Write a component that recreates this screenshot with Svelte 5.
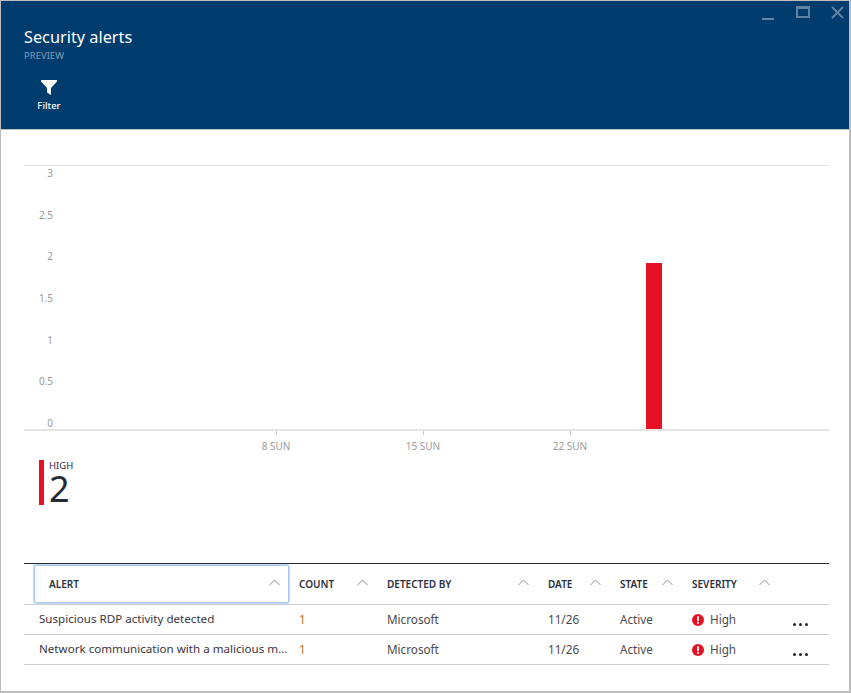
<script>
	const yLabels = ['3', '2.5', '2', '1.5', '1', '0.5', '0'];
	const ticks = [
		{ x: 252, label: '8 SUN' },
		{ x: 399, label: '15 SUN' },
		{ x: 546, label: '22 SUN' }
	];
	const columns = ['ALERT', 'COUNT', 'DETECTED BY', 'DATE', 'STATE', 'SEVERITY'];
	const alerts = [
		{ name: 'Suspicious RDP activity detected', count: 1, by: 'Microsoft', date: '11/26', state: 'Active', severity: 'High' },
		{ name: 'Network communication with a malicious m...', count: 1, by: 'Microsoft', date: '11/26', state: 'Active', severity: 'High' }
	];
</script>

<div class="blade">
	<header class="head">
		<div class="controls">
			<svg width="14" height="14" viewBox="0 0 14 14"><rect x="1" y="12" width="12" height="2" fill="#5f83a3" /></svg>
			<svg width="14" height="12" viewBox="0 0 14 12"><path d="M1 1h12v10H1z" fill="none" stroke="#5f83a3" stroke-width="2" /><rect x="0" y="0" width="14" height="3" fill="#5f83a3" /></svg>
			<svg width="13" height="13" viewBox="0 0 13 13"><path d="M1 1l11 11M12 1L1 12" stroke="#5f83a3" stroke-width="2" fill="none" /></svg>
		</div>
		<h1>Security alerts</h1>
		<div class="sub">PREVIEW</div>
		<button class="cmd">
			<svg width="16" height="15" viewBox="0 0 16 15"><path d="M0 0h16v1.5L10 8v7L6 12.5V8L0 1.500z" fill="#fff" /></svg>
			<span>Filter</span>
		</button>
	</header>

	<section class="chart">
		<div class="ylabels">
			{#each yLabels as label}
				<span>{label}</span>
			{/each}
		</div>
		<div class="bar"></div>
		{#each ticks as tick}
			<div class="tick" style="left: {tick.x}px"><i></i><span>{tick.label}</span></div>
		{/each}
	</section>

	<div class="legend">
		<div class="swatch"></div>
		<div>
			<div class="legend-name">HIGH</div>
			<div class="legend-value">2</div>
		</div>
	</div>

	<section class="grid">
		<div class="row header">
			{#each columns as col, i}
				<div class="th" class:focused={i === 0}>
					<span>{col}</span>
					<svg class="chev" width="11" height="7" viewBox="0 0 11 7"><path d="M.5 6L5.500 1l5 5" fill="none" stroke="#8a8a8a" /></svg>
				</div>
			{/each}
			<div></div>
		</div>
		{#each alerts as alert}
			<div class="row">
				<div class="td name">{alert.name}</div>
				<div class="td count">{alert.count}</div>
				<div class="td">{alert.by}</div>
				<div class="td">{alert.date}</div>
				<div class="td">{alert.state}</div>
				<div class="td sev">
					<svg width="12" height="12" viewBox="0 0 13 13"><circle cx="6.500" cy="6.500" r="6.500" fill="#e81123" /><rect x="5.500" y="2.500" width="2" height="5" fill="#fff" /><rect x="5.500" y="8.500" width="2" height="2" fill="#fff" /></svg>
					{alert.severity}
				</div>
				<div class="td dots"><i></i><i></i><i></i></div>
			</div>
		{/each}
	</section>
</div>

<style>
	:global(body) {
		background: #fff;
	}

	.blade {
		box-sizing: border-box;
		width: 851px;
		height: 693px;
		border: 1px solid #bdbdbd;
		border-width: 1px 2px 2px 1px;
		font-family: "Noto Sans", "Open Sans", sans-serif;
		color: #3a3a3a;
		overflow: hidden;
	}

	.head {
		position: relative;
		box-sizing: border-box;
		height: 129px;
		padding: 24px 0 0 23px;
		background: #003c6e;
		border-bottom: 1px solid #bdbdbd;
		color: #fff;
	}

	.controls {
		position: absolute;
		top: 5px;
		right: 5px;
		display: flex;
		align-items: flex-start;
		gap: 21px;
	}

	h1 {
		margin: 0;
		font-size: 16.300px;
		font-weight: 400;
		line-height: 24px;
	}

	.sub {
		font-size: 9.500px;
		line-height: 13px;
		color: #7f9db7;
	}

	.cmd {
		display: flex;
		flex-direction: column;
		align-items: center;
		width: 52px;
		margin: 18px 0 0 -1px;
		padding: 0;
		background: none;
		border: 0;
		color: #fff;
		font: inherit;
		font-size: 9.500px;
		font-weight: 500;
		line-height: 13px;
		gap: 4px;
	}

	.chart {
		position: relative;
		box-sizing: border-box;
		height: 266px;
		margin: 35px 20px 0 23px;
		border-top: 1px solid #e4e4e4;
		border-bottom: 2px solid #e4e4e4;
	}

	.ylabels {
		position: absolute;
		top: 0;
		left: 20px;
		width: 9px;
		height: 264px;
		display: flex;
		flex-direction: column;
		justify-content: space-between;
		align-items: flex-end;
		font-size: 10px;
		line-height: 14px;
		color: #9a9a9a;
	}

	.bar {
		position: absolute;
		left: 622px;
		bottom: 0;
		width: 16px;
		height: 166px;
		background: #e81123;
	}

	.tick {
		position: absolute;
		top: 100%;
		display: flex;
		flex-direction: column;
		align-items: center;
		width: 0;
		font-size: 10px;
		line-height: 14px;
		color: #9a9a9a;
	}

	.tick i {
		flex: none;
		width: 1px;
		height: 4px;
		margin-top: 2px;
		background: #c8c8c8;
	}

	.tick span {
		flex: none;
		margin-top: 4px;
		white-space: nowrap;
	}

	.legend {
		display: flex;
		gap: 5px;
		height: 45px;
		margin: 29px 0 0 38px;
	}

	.swatch {
		width: 5px;
		height: 45px;
		background: #e81123;
	}

	.legend-name {
		height: 11px;
		margin-top: -1px;
		font-size: 9.500px;
		line-height: 13px;
		color: #32283c;
	}

	.legend-value {
		font-size: 36px;
		line-height: 32px;
		margin-top: 3px;
		color: #252b36;
	}

	.grid {
		margin: 58px 20px 0 23px;
		border-top: 1px solid #2b2b2b;
	}

	.row {
		box-sizing: border-box;
		display: grid;
		grid-template-columns: 265px 88px 161px 72px 72px 97px 51px;
		height: 30px;
		border-bottom: 1px solid #cfcfcf;
	}

	.row.header {
		height: 41px;
	}

	.th {
		position: relative;
		display: flex;
		align-items: center;
		padding-left: 10px;
		font-size: 10px;
		font-weight: 600;
		color: #2b3140;
	}

	.th .chev {
		position: absolute;
		right: 9px;
		top: 15px;
	}

	.th.focused {
		box-sizing: border-box;
		margin: 1px 0 0 10px;
		height: 38px;
		padding-left: 14px;
		border: 1px solid #a9c7f5;
		border-radius: 2px;
		box-shadow: 0 0 0 1px #c4d8f8;
	}

	.th.focused .chev {
		top: 13px;
		right: 8px;
	}

	.td {
		display: flex;
		align-items: center;
		padding: 0 0 2px 10px;
		font-size: 11.700px;
		color: #4a4a4a;
		white-space: nowrap;
		min-width: 0;
	}

	.td.name {
		padding-left: 15px;
		font-size: 11.600px;
		color: #3a3540;
	}

	.count {
		color: #b5762a;
	}

	.sev {
		gap: 6px;
	}

	.sev svg {
		margin-top: 3px;
	}

	.dots {
		gap: 3px;
		padding: 10px 0 0 14px;
	}

	.dots i {
		width: 3px;
		height: 3px;
		border-radius: 50%;
		background: #222;
	}
</style>
